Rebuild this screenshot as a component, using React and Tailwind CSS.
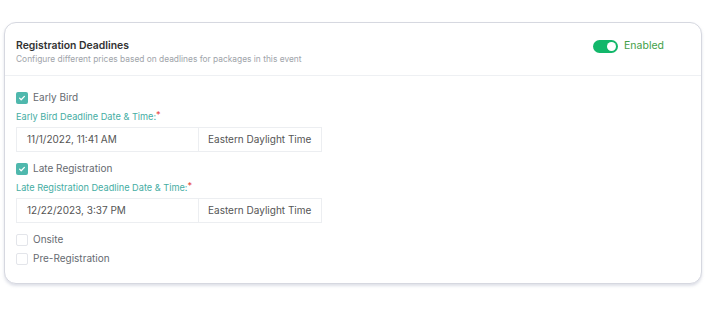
import React, { useState } from 'react';

const Check = ({ checked, label, onChange }) => (
  <label className="flex items-center gap-[5px] h-[19px] cursor-pointer">
    <span
      onClick={onChange}
      className={`w-[12px] h-[12px] rounded-[2px] flex items-center justify-center ${
        checked ? 'bg-[#4fb8ad]' : 'border border-[#e3e5ea] bg-white'
      }`}
    >
      {checked && (
        <svg width="8" height="8" viewBox="0 0 10 10" fill="none">
          <path d="M2 5.2l2 2L8 3" stroke="white" strokeWidth="1.6" strokeLinecap="round" strokeLinejoin="round" />
        </svg>
      )}
    </span>
    <span className="text-[10px] text-[#666a70]">{label}</span>
  </label>
);

const Deadline = ({ label, value }) => (
  <div className="flex flex-col">
    <div className="text-[9.2px] text-[#45ada3] h-[20px] flex items-center">
      {label}
      <span className="text-[#e53935] -mt-[4px]">*</span>
    </div>
    <div className="flex h-[25px] text-[10px] text-[#555]">
      <div className="w-[183px] border border-[#eceef1] flex items-center pl-[10px]">{value}</div>
      <div className="w-[123px] border border-l-0 border-[#eceef1] flex items-center pl-[9px]">
        Eastern Daylight Time
      </div>
    </div>
  </div>
);

const App = () => {
  const [enabled, setEnabled] = useState(true);
  const [opts, setOpts] = useState({ early: true, late: true, onsite: false, pre: false });
  const toggle = (k) => setOpts({ ...opts, [k]: !opts[k] });

  return (
    <div className="w-[706px] h-[316px] bg-white pt-[22px] px-[4px]" style={{ fontFamily: 'Inter, "Open Sans", sans-serif' }}>
      <div className="border border-[#d6d8e0] rounded-[12px] shadow-[0_2px_3px_rgba(160,165,190,0.35)] bg-white">
        <div className="flex items-start justify-between pl-[11px] pr-[37px] pt-[16px] pb-[10px] border-b border-[#eef0f3]">
          <div className="flex flex-col">
            <div className="text-[10.4px] font-semibold text-[#333] leading-[14px]">Registration Deadlines</div>
            <div className="text-[8.4px] text-[#a0a4aa] leading-[12px]">
              Configure different prices based on deadlines for packages in this event
            </div>
          </div>
          <div className="flex items-center gap-[6px] h-[14px]">
            <button
              onClick={() => setEnabled(!enabled)}
              className={`w-[25px] h-[13px] rounded-full flex items-center px-[2px] ${
                enabled ? 'bg-[#12b76a] justify-end' : 'bg-gray-300 justify-start'
              }`}
            >
              <span className="w-[9px] h-[9px] rounded-full bg-white" />
            </button>
            <span className="text-[10.5px] text-[#43a047]">Enabled</span>
          </div>
        </div>
        <div className="pl-[11px] pt-[12px] pb-[15px] flex flex-col">
          <Check checked={opts.early} label="Early Bird" onChange={() => toggle('early')} />
          <Deadline label="Early Bird Deadline Date & Time:" value="11/1/2022, 11:41 AM" />
          <div className="mt-[7px]">
            <Check checked={opts.late} label="Late Registration" onChange={() => toggle('late')} />
          </div>
          <Deadline label="Late Registration Deadline Date & Time:" value="12/22/2023, 3:37 PM" />
          <div className="mt-[7px]">
            <Check checked={opts.onsite} label="Onsite" onChange={() => toggle('onsite')} />
          </div>
          <Check checked={opts.pre} label="Pre-Registration" onChange={() => toggle('pre')} />
        </div>
      </div>
    </div>
  );
};

export default App;
